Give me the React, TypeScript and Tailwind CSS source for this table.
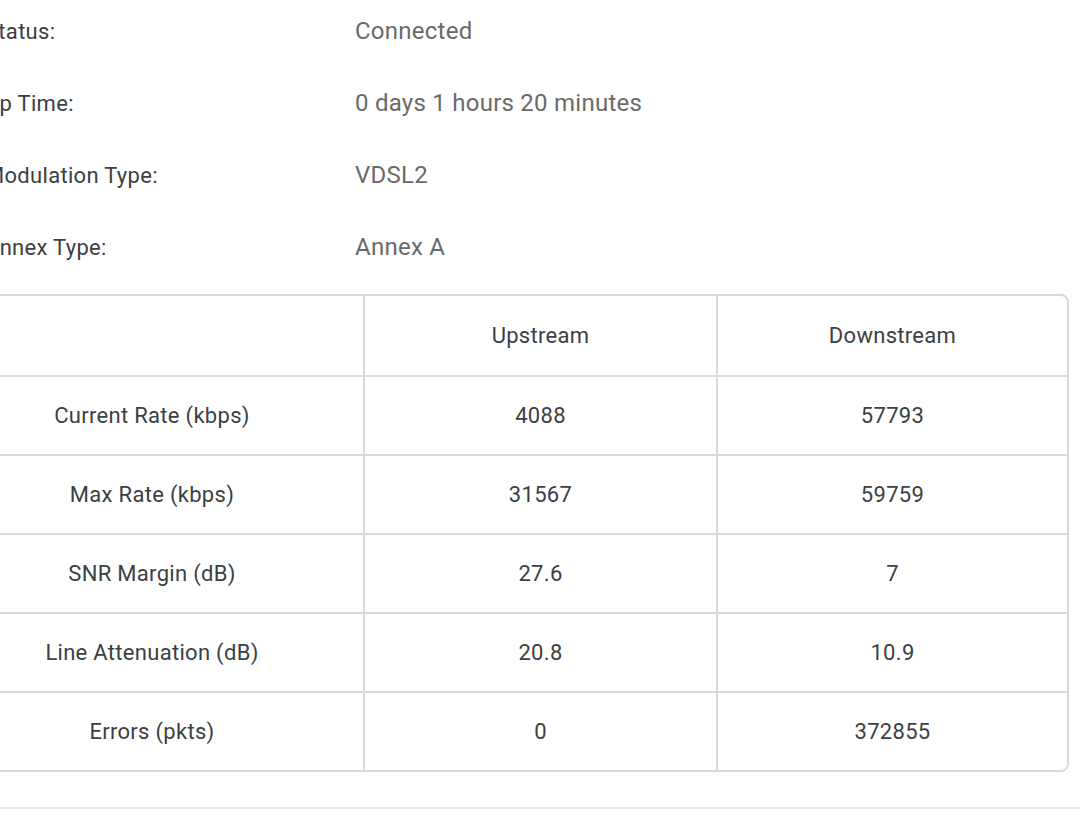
import React from 'react';

const info = [
  { label: 'Status:', value: 'Connected' },
  { label: 'Up Time:', value: '0 days 1 hours 20 minutes' },
  { label: 'Modulation Type:', value: 'VDSL2' },
  { label: 'Annex Type:', value: 'Annex A' },
];

const rows = [
  { name: 'Current Rate (kbps)', up: '4088', down: '57793' },
  { name: 'Max Rate (kbps)', up: '31567', down: '59759' },
  { name: 'SNR Margin (dB)', up: '27.6', down: '7' },
  { name: 'Line Attenuation (dB)', up: '20.8', down: '10.9' },
  { name: 'Errors (pkts)', up: '0', down: '372855' },
];

const App: React.FC = () => {
  return (
    <div className="min-h-screen bg-white overflow-hidden font-['Roboto',sans-serif]">
      <div className="-mt-[5px]">
        {/* Line info */}
        <div className="ml-[-15px]">
          {info.map(item => (
            <div key={item.label} className="flex items-center h-[72px]">
              <span className="w-[370px] shrink-0 text-[22px] tracking-[0.3px] text-[#3c4043]">{item.label}</span>
              <span className="text-[24px] tracking-[0.25px] text-[#6a6a6a]">{item.value}</span>
            </div>
          ))}
        </div>

        {/* Rate table */}
        <div className="mt-[11px] ml-[-61px] w-[1130px] border-2 border-[#d9d9d9] rounded-[8px] text-[22px] tracking-[0.3px] text-[#3c4043]">
          <div className="grid grid-cols-[422px_353px_1fr] h-[79px]">
            <div />
            <div className="border-l-2 border-[#d9d9d9] flex items-center justify-center">Upstream</div>
            <div className="border-l-2 border-[#d9d9d9] flex items-center justify-center">Downstream</div>
          </div>
          {rows.map(r => (
            <div key={r.name} className="grid grid-cols-[422px_353px_1fr] h-[79px] border-t-2 border-[#d9d9d9]">
              <div className="flex items-center justify-center">{r.name}</div>
              <div className="border-l-2 border-[#d9d9d9] flex items-center justify-center">{r.up}</div>
              <div className="border-l-2 border-[#d9d9d9] flex items-center justify-center">{r.down}</div>
            </div>
          ))}
        </div>

        <div className="mt-[35px] h-[2px] bg-[#e3e3e3]" />
      </div>
    </div>
  );
};

export default App;
